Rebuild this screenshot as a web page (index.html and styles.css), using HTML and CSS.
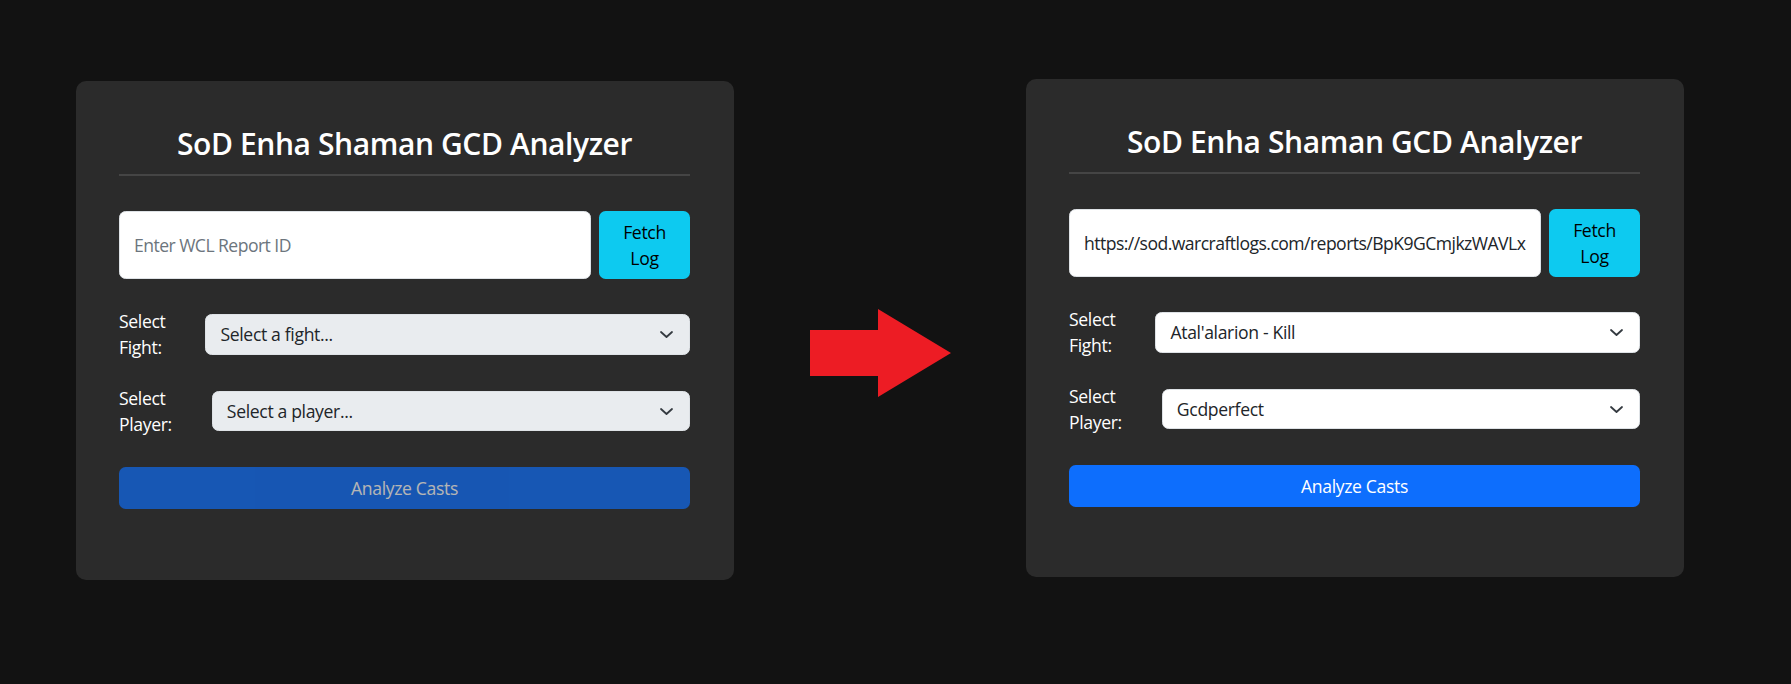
FILE: index.html
```html
<!DOCTYPE html>
<html lang="en">
<head>
<meta charset="utf-8">
<title>SoD Enha Shaman GCD Analyzer</title>
<link rel="stylesheet" href="styles.css">
</head>
<body>
<main class="stage">
  <section class="card card-before">
    <h3 class="title">SoD Enha Shaman GCD Analyzer</h3>
    <div class="input-group">
      <input class="report-input" type="text" placeholder="Enter WCL Report ID">
      <button class="fetch-btn">Fetch Log</button>
    </div>
    <div class="field-row">
      <label class="field-label">Select Fight:</label>
      <div class="select disabled">
        <span>Select a fight...</span>
        <svg class="chev" width="13" height="7" viewBox="0 0 13 7"><polyline points="1,1 6.5,6 12,1" fill="none" stroke="#343a40" stroke-width="1.8" stroke-linecap="round" stroke-linejoin="round"/></svg>
      </div>
    </div>
    <div class="field-row">
      <label class="field-label">Select Player:</label>
      <div class="select disabled">
        <span>Select a player...</span>
        <svg class="chev" width="13" height="7" viewBox="0 0 13 7"><polyline points="1,1 6.5,6 12,1" fill="none" stroke="#343a40" stroke-width="1.8" stroke-linecap="round" stroke-linejoin="round"/></svg>
      </div>
    </div>
    <button class="analyze-btn is-disabled">Analyze Casts</button>
  </section>

  <div class="arrow">
    <svg width="141" height="88" viewBox="0 0 141 88"><polygon points="0,21 68,21 68,0 141,44 68,88 68,67 0,67" fill="#ed1c24"/></svg>
  </div>

  <section class="card card-after">
    <h3 class="title">SoD Enha Shaman GCD Analyzer</h3>
    <div class="input-group">
      <input class="report-input" type="text" value="https://sod.warcraftlogs.com/reports/BpK9GCmjkzWAVLx">
      <button class="fetch-btn">Fetch Log</button>
    </div>
    <div class="field-row">
      <label class="field-label">Select Fight:</label>
      <div class="select">
        <span>Atal'alarion - Kill</span>
        <svg class="chev" width="13" height="7" viewBox="0 0 13 7"><polyline points="1,1 6.5,6 12,1" fill="none" stroke="#343a40" stroke-width="1.8" stroke-linecap="round" stroke-linejoin="round"/></svg>
      </div>
    </div>
    <div class="field-row">
      <label class="field-label">Select Player:</label>
      <div class="select">
        <span>Gcdperfect</span>
        <svg class="chev" width="13" height="7" viewBox="0 0 13 7"><polyline points="1,1 6.5,6 12,1" fill="none" stroke="#343a40" stroke-width="1.8" stroke-linecap="round" stroke-linejoin="round"/></svg>
      </div>
    </div>
    <button class="analyze-btn">Analyze Casts</button>
  </section>
</main>
</body>
</html>
```

FILE: styles.css
```css
* { box-sizing: border-box; }
html, body {
  margin: 0;
  padding: 0;
  background: #121212;
  width: 1791px;
  height: 684px;
  overflow: hidden;
  font-family: "Open Sans", "Noto Sans", sans-serif;
  font-size: 17.6px;
  line-height: 1.5;
  letter-spacing: -0.35px;
  color: #fff;
}
.stage {
  display: flex;
  align-items: flex-start;
  padding: 79px 0 0 76px;
}
.card {
  width: 658px;
  height: 498px;
  background: #2b2b2b;
  border-radius: 10px;
  padding: 45px 44px 0 43px;
  display: flex;
  flex-direction: column;
}
.card-before { margin-top: 2px; height: 499px; }
.arrow {
  margin: 230px 75px 0 76px;
  width: 141px;
  height: 88px;
}
.arrow svg { display: block; }
.title {
  margin: 0;
  font-size: 30px;
  font-weight: 600;
  line-height: 36px;
  text-align: center;
  padding-bottom: 11.5px;
  border-bottom: 2px solid #454545;
  letter-spacing: -0.4px;
}
.input-group {
  display: flex;
  gap: 8px;
  margin-top: 35.5px;
  height: 68px;
}
.report-input {
  flex: 1;
  min-width: 0;
  height: 68px;
  border: 1px solid #dee2e6;
  border-radius: 6.6px;
  background: #fff;
  padding: 6.6px 14px;
  font: inherit;
  letter-spacing: -0.55px;
  color: #212529;
  outline: none;
}
.report-input::placeholder { color: #6c757d; }
.fetch-btn {
  width: 91px;
  height: 68px;
  border: 0;
  border-radius: 6.6px;
  background: #0dcaf0;
  color: #000;
  font: inherit;
  letter-spacing: inherit;
  line-height: 26.4px;
  padding: 0 20px;
  text-align: center;
}
.field-row {
  display: flex;
  align-items: center;
  gap: 40px;
  margin-top: 29px;
}
.field-row + .field-row { margin-top: 24px; }
.field-label {
  flex: 0 0 min-content;
  width: min-content;
  line-height: 26.4px;
  color: #fff;
}
.select {
  flex: 1;
  height: 40.5px;
  display: flex;
  align-items: center;
  justify-content: space-between;
  background: #fff;
  border: 1px solid #dee2e6;
  border-radius: 6.6px;
  padding: 0 16px 0 14px;
  color: #212529;
}
.select.disabled { background: #e9ecef; }
.chev { display: block; }
.analyze-btn {
  margin-top: 29.8px;
  height: 41.6px;
  width: 100%;
  border: 0;
  border-radius: 6.6px;
  background: #0d6efd;
  color: #fff;
  font: inherit;
  letter-spacing: inherit;
  text-align: center;
}
.analyze-btn.is-disabled { opacity: 0.65; }
```
